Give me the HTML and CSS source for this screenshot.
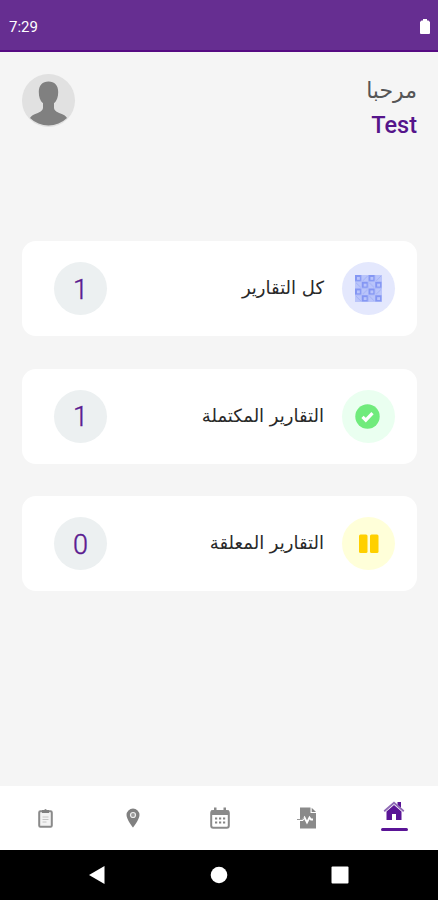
FILE: index.html
```html
<!DOCTYPE html>
<html lang="ar" dir="rtl">
<head>
  <meta charset="UTF-8">
  <meta name="viewport" content="width=device-width, initial-scale=1.0">
  <title>التقارير</title>
  <link rel="stylesheet" href="styles.css">
</head>
<body>
  <header class="status-bar" dir="ltr">
    <span class="time">7:29</span>
    <svg class="battery" width="10" height="15" viewBox="0 0 10 15"><path d="M3 0h4v1.500h1.500l1.500 1.500v11q0 1-1 1H1q-1 0-1-1V3l1.500-1.500H3z" fill="#fff"/></svg>
  </header>

  <main>
    <section class="welcome">
      <div class="greeting">
        <p class="hello">مرحبا</p>
        <p class="name">Test</p>
      </div>
      <svg class="avatar" viewBox="0 0 54 54">
        <circle cx="26.500" cy="26.500" r="26.500" fill="#e1e1e1"/>
        <path d="M26.500 7.500c-6 0-9.700 4-9.700 10.500 0 5 1.300 8.700 4.200 11.300v4.200c0 3-2.500 4.500-6.500 6-3.700 1.300-5.500 2.500-6.500 4.500a26.500 26.500 0 0 0 37 0c-1-2-2.800-3.200-6.500-4.500-4-1.500-6.500-3-6.500-6v-4.200c2.900-2.600 4.200-6.300 4.200-11.300 0-6.500-3.700-10.500-9.700-10.500z" fill="#808080"/>
      </svg>
    </section>

    <section class="cards">
      <div class="card">
        <div class="icon all">
          <svg width="27" height="27" viewBox="0 0 28 28">
            <defs>
              <pattern id="tiles" width="14" height="14" patternUnits="userSpaceOnUse">
                <rect width="14" height="14" fill="#b9c4fa"/>
                <path d="M0 0h6.500v6.500H0zM7 7h6.500v6.500H7z" fill="#8496f3"/>
                <path d="M2 2h3v3H2zM9 9h3v3H9z" fill="#b9c4fb"/>
                <path d="M8 6l5-5M1 8l5 5" stroke="#a0aff5"/>
              </pattern>
            </defs>
            <rect width="28" height="28" fill="url(#tiles)"/>
          </svg>
        </div>
        <h3>كل التقارير</h3>
        <div class="count">1</div>
      </div>
      <div class="card">
        <div class="icon done">
          <svg width="27" height="25" viewBox="0 0 27 25">
            <circle cx="12.500" cy="12.500" r="12.200" fill="#70eb7c"/>
            <path d="M7.500 12.800l3.300 3.300 6.700-7" fill="none" stroke="#fff" stroke-width="3.200"/>
          </svg>
        </div>
        <h3>التقارير المكتملة</h3>
        <div class="count">1</div>
      </div>
      <div class="card">
        <div class="icon pending">
          <svg width="20" height="20" viewBox="0 0 20 20" fill="#ffd000">
            <rect x="0" y="0.500" width="8.500" height="18.500" rx="1.500"/>
            <rect x="11" y="0.500" width="8.500" height="18.500" rx="1.500"/>
          </svg>
        </div>
        <h3>التقارير المعلقة</h3>
        <div class="count">0</div>
      </div>
    </section>
  </main>

  <nav class="tabs">
    <a class="tab active">
      <svg width="22" height="20" viewBox="0 0 22 20">
        <path d="M3.500 10.500L11 4l7.500 6.500V19h-5.500v-6H9v6H3.500z" fill="#5a1496"/>
        <path d="M14.500 1h3.500v6l-3.500-2.800z" fill="#5a1496"/>
        <path d="M1.200 10.300L11 1.800l9.800 8.500" fill="none" stroke="#8f6bb5" stroke-width="1.800"/>
      </svg>
    </a>
    <a class="tab">
      <svg width="20" height="22" viewBox="0 0 20 22">
        <path d="M3 .5h10.500V6H19v15.500H3z" fill="#8a8a8a"/>
        <path d="M14.700.7L19 5h-4.300z" fill="#858585"/>
        <path d="M3 13h2.500l2-2.500 2.500 5 2.500-5 1.500 2h2" fill="none" stroke="#fff" stroke-width="1.800"/>
        <path d="M0 12.500h5l2-2" fill="none" stroke="#999" stroke-width="1.200"/>
      </svg>
    </a>
    <a class="tab">
      <svg width="20" height="22" viewBox="0 0 20 22">
        <rect x="1.200" y="4" width="17.600" height="16.800" rx="2" fill="#fff" stroke="#8a8a8a" stroke-width="2"/>
        <path d="M1 3.500h18v4.500H1zM4 .5h2.500v4H4zM13.500.5H16v4h-2.500z" fill="#8a8a8a"/>
        <path d="M5 11.500h2.200M9 11.500h2.200M13 11.500h2.200M5 15.500h2.200M9 15.500h2.200M13 15.500h2.200" stroke="#858585" stroke-width="2.200"/>
      </svg>
    </a>
    <a class="tab">
      <svg width="14" height="20" viewBox="0 0 14 20">
        <path d="M7 .5a6.500 6.500 0 0 0-6.500 6.500C.5 11.500 7 19.500 7 19.500S13.500 11.500 13.500 7A6.500 6.500 0 0 0 7 .5z" fill="#808080"/>
        <circle cx="7" cy="7" r="2.500" fill="#999" stroke="#eee" stroke-width="1.200"/>
      </svg>
    </a>
    <a class="tab">
      <svg width="15" height="19" viewBox="0 0 15 19">
        <rect x="1.200" y="2.200" width="12.600" height="15.600" rx="1.200" fill="#f3f3f3" stroke="#8a8a8a" stroke-width="2"/>
        <path d="M4 1h2l1.500-1L9 1h2v3H4z" fill="#808080"/>
        <path d="M4.500 8h6M4.500 10.500h6M4.500 13h4" stroke="#c4c4c4"/>
      </svg>
    </a>
  </nav>

  <footer class="system-bar" dir="ltr">
    <svg width="18" height="20" viewBox="0 0 18 20"><path d="M1 10L16.500 1v18z" fill="#fff"/></svg>
    <svg width="18" height="18" viewBox="0 0 18 18"><circle cx="9" cy="9" r="8.300" fill="#fff"/></svg>
    <svg width="18" height="18" viewBox="0 0 18 18"><rect x="0.500" y="0.500" width="17" height="17" rx="1" fill="#fff"/></svg>
  </footer>
</body>
</html>
```
FILE: styles.css
```css
* { box-sizing: border-box; }
body {
  margin: 0;
  height: 900px;
  display: flex;
  flex-direction: column;
  background-color: #f5f5f5;
  font-family: Roboto, "DejaVu Sans", sans-serif;
}
.status-bar {
  height: 52px;
  padding: 4px 8px 0 9px;
  display: flex;
  align-items: center;
  justify-content: space-between;
  background-color: #662e91;
  border-bottom: 2px solid #560b83;
  color: white;
}
.time {
  font-size: 15px;
}
.battery {
  margin-bottom: 2px;
}
main {
  flex: 1;
  padding: 22px 21px 0 22px;
}
.welcome {
  height: 167px;
  display: flex;
  justify-content: space-between;
  align-items: flex-start;
}
.welcome p { margin: 0; }
.hello {
  font-family: "DejaVu Sans", sans-serif;
  font-size: 22px;
  line-height: 34px;
  color: #555;
}
.name {
  font-size: 23.500px;
  line-height: 34px;
  font-weight: 500;
  color: #55158b;
}
.avatar {
  width: 54px;
  height: 54px;
}
.cards {
  display: flex;
  flex-direction: column;
  gap: 32.500px;
}
.card {
  height: 95px;
  padding: 0 22px 0 32px;
  display: flex;
  align-items: center;
  background-color: white;
  border-radius: 14px;
}
.card h3 {
  flex: 1;
  margin: 0;
  padding: 0 18px 2px 0;
  font-family: "DejaVu Sans", sans-serif;
  font-size: 18px;
  font-weight: normal;
  color: #292929;
}
.icon, .count {
  width: 53px;
  height: 53px;
  border-radius: 50%;
  display: flex;
  align-items: center;
  justify-content: center;
}
.all { background-color: #e4e8fd; }
.done { background-color: #eafff0; }
.pending { background-color: #ffffd9; }
.count {
  padding-top: 2px;
  background-color: #ecf0f1;
  color: #5a1a8f;
  font-size: 27px;
  font-weight: 300;
  -webkit-text-stroke: 0.4px #5a1a8f;
}
.tabs {
  height: 64px;
  padding-left: 2px;
  display: flex;
  background-color: white;
}
.tab {
  flex: 1;
  display: flex;
  flex-direction: column;
  align-items: center;
  justify-content: center;
}
.active {
  padding-bottom: 5px;
}
.active::after {
  content: "";
  width: 27px;
  height: 3px;
  margin-top: 7px;
  border-radius: 2px;
  background-color: #5a1496;
}
.system-bar {
  height: 50px;
  padding: 0 89px 0 88px;
  display: flex;
  align-items: center;
  justify-content: space-between;
  background-color: black;
}
```
